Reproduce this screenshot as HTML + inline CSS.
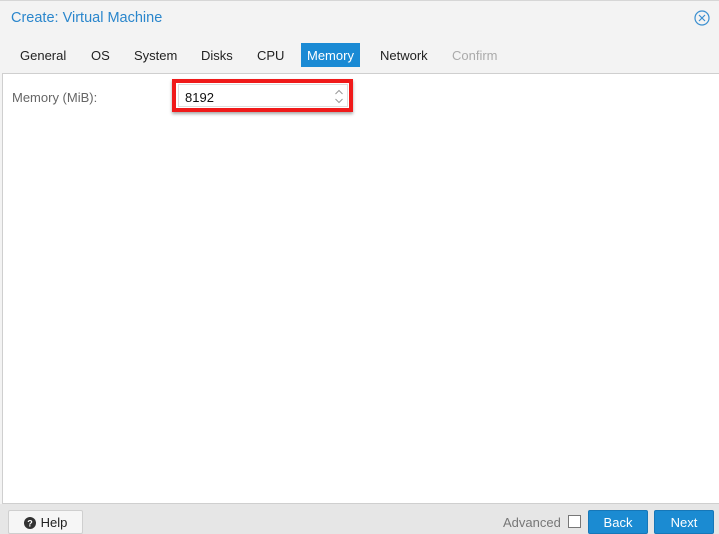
<!DOCTYPE html>
<html><head><meta charset="utf-8"><style>
*{box-sizing:border-box;margin:0;padding:0}
body{width:719px;height:534px;overflow:hidden;background:#f3f3f3;font-family:"Liberation Sans",Helvetica,sans-serif;position:relative}
.topline{position:absolute;left:0;top:0;width:719px;height:1px;background:#d6d6d6}
.title{position:absolute;left:11px;top:10px;font-size:14.5px;color:#2a86cc}
.close{position:absolute;left:694px;top:10px}
.tab{position:absolute;top:43px;height:24px;line-height:25px;font-size:13px;color:#222}
.tab.act{background:#1a8ad4;color:#fff;padding:0 6px}
.body{position:absolute;left:2px;top:73px;width:717px;height:431px;background:#fff;border-top:1px solid #cfcfcf;border-left:1px solid #cfcfcf;border-bottom:1px solid #cfcfcf}
.lbl{position:absolute;left:12px;top:90px;font-size:13px;color:#666}
.red{position:absolute;left:172px;top:79px;width:181px;height:33px;border:4px solid #f01a1a;box-shadow:0 2px 3px rgba(0,0,0,.35)}
.inp{position:absolute;left:178px;top:84px;width:170px;height:23px;background:#fff;border:1px solid #ddd}
.val{position:absolute;left:185px;top:90px;font-size:13px;color:#111}
.foot{position:absolute;left:0;top:504px;width:719px;height:30px;background:#e6e6e6}
.btn{position:absolute;top:510px;height:24px;line-height:23px;font-size:13px;text-align:center;border-radius:2px}
.help{left:8px;width:75px;background:#f6f6f6;border:1px solid #cfcfcf;color:#222}
.blue{background:#1b8bd2;color:#fff;border:1px solid #1677b8}
</style></head><body>
<div class="topline"></div>
<div class="title">Create: Virtual Machine</div>
<svg class="close" width="16" height="16" viewBox="0 0 16 16"><circle cx="8" cy="8" r="7" fill="none" stroke="#3a8fd0" stroke-width="1.2"/><path d="M5 5L11 11M11 5L5 11" stroke="#3a8fd0" stroke-width="1.2"/></svg>
<div class="tab" style="left:20px">General</div>
<div class="tab" style="left:91px">OS</div>
<div class="tab" style="left:134px">System</div>
<div class="tab" style="left:201px">Disks</div>
<div class="tab" style="left:257px">CPU</div>
<div class="tab act" style="left:301px">Memory</div>
<div class="tab" style="left:380px">Network</div>
<div class="tab" style="left:452px;color:#aaa">Confirm</div>
<div class="body"></div>
<div class="lbl">Memory (MiB):</div>
<div class="red"></div>
<div class="inp"></div>
<div class="val">8192</div>
<svg style="position:absolute;left:334px;top:88px" width="10" height="17" viewBox="0 0 10 17"><path d="M1.5 6L5 2.5L8.5 6M1.5 11L5 14.5L8.5 11" fill="none" stroke="#999" stroke-width="1"/></svg>
<div class="foot"></div>
<div class="btn help"><svg width="12" height="12" viewBox="0 0 12 12" style="vertical-align:-2px;margin-right:5px"><circle cx="6" cy="6" r="6" fill="#333"/><text x="6" y="9.5" font-size="9" font-weight="bold" fill="#fff" text-anchor="middle" font-family="Liberation Sans">?</text></svg>Help</div>
<div style="position:absolute;left:503px;top:515px;font-size:13px;color:#777">Advanced</div>
<div style="position:absolute;left:568px;top:515px;width:13px;height:13px;background:#fff;border:1px solid #777"></div>
<div class="btn blue" style="left:588px;width:60px">Back</div>
<div class="btn blue" style="left:654px;width:60px">Next</div>
</body></html>
